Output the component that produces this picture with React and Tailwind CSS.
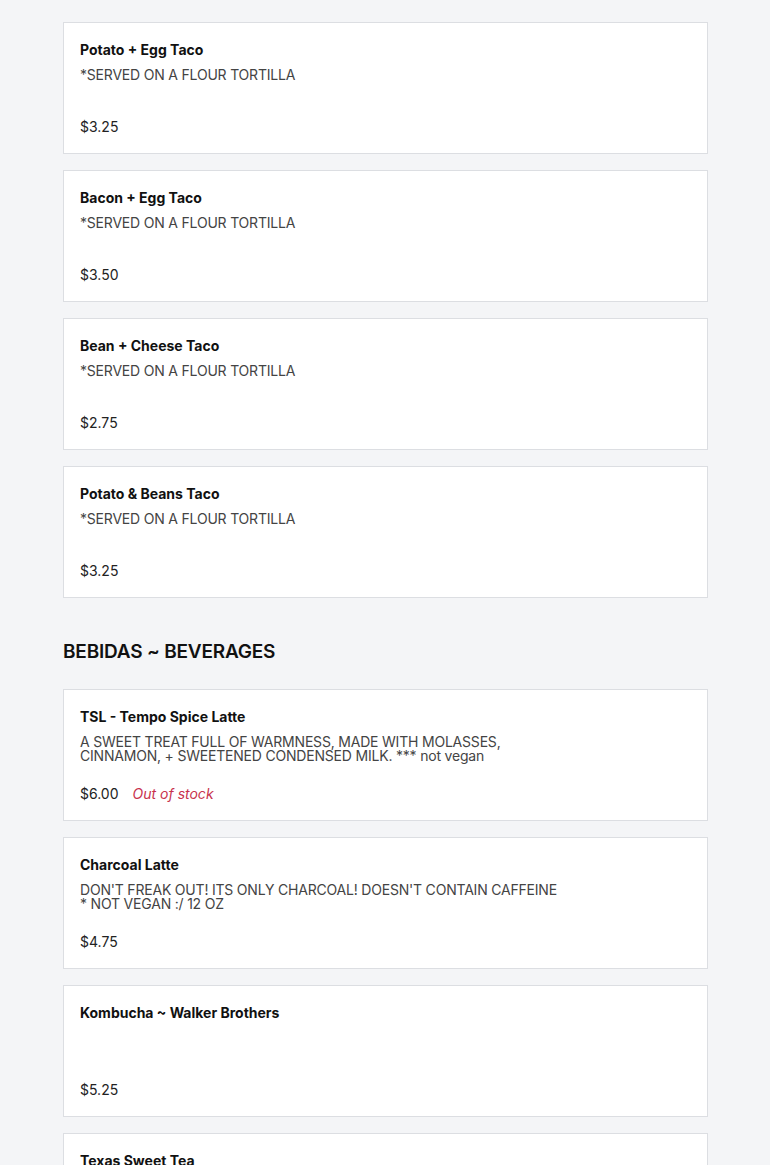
import React from "react";

const tacos = [
  { name: "Potato + Egg Taco", desc: ["*SERVED ON A FLOUR TORTILLA"], price: "$3.25" },
  { name: "Bacon + Egg Taco", desc: ["*SERVED ON A FLOUR TORTILLA"], price: "$3.50" },
  { name: "Bean + Cheese Taco", desc: ["*SERVED ON A FLOUR TORTILLA"], price: "$2.75" },
  { name: "Potato & Beans Taco", desc: ["*SERVED ON A FLOUR TORTILLA"], price: "$3.25" },
];

const drinks = [
  {
    name: "TSL - Tempo Spice Latte",
    desc: [
      "A SWEET TREAT FULL OF WARMNESS, MADE WITH MOLASSES,",
      "CINNAMON, + SWEETENED CONDENSED MILK. *** not vegan",
    ],
    price: "$6.00",
    out: true,
  },
  {
    name: "Charcoal Latte",
    desc: [
      "DON'T FREAK OUT! ITS ONLY CHARCOAL! DOESN'T CONTAIN CAFFEINE",
      "* NOT VEGAN :/ 12 OZ",
    ],
    price: "$4.75",
  },
  { name: "Kombucha ~ Walker Brothers", desc: [], price: "$5.25" },
  { name: "Texas Sweet Tea", desc: [], price: "$3.00" },
];

function Item({ item }) {
  return (
    <div className="h-[132px] bg-white border border-[#dcdee2] px-4 pt-[17px] pb-4 flex flex-col">
      <h3 className="text-[14px] leading-5 font-bold text-[#111]">{item.name}</h3>
      {item.desc.length > 0 && (
        <p className="mt-[8px] text-[14px] leading-[14px] text-[#444] tracking-[-0.2px]">
          {item.desc.map((d, i) => (
            <span key={i} className="block">{d}</span>
          ))}
        </p>
      )}
      <div className="mt-auto flex items-center gap-[14px] text-[14px] leading-5 text-[#222]">
        <span>{item.price}</span>
        {item.out && <span className="italic text-[#c8334d]">Out of stock</span>}
      </div>
    </div>
  );
}

export default function App() {
  return (
    <div
      className="w-full min-h-screen bg-[#f4f5f7] pt-[22px] pb-10"
      style={{ fontFamily: "Inter, 'Noto Sans', sans-serif" }}
    >
      <div className="w-[645px] ml-[63px] flex flex-col gap-4">
        {tacos.map((t) => (
          <Item key={t.name} item={t} />
        ))}
      </div>

      <h2 className="ml-[63px] mt-[40px] mb-[23px] text-[19px] leading-7 font-semibold tracking-[-0.2px] text-[#111]">
        BEBIDAS ~ BEVERAGES
      </h2>

      <div className="w-[645px] ml-[63px] flex flex-col gap-4">
        {drinks.map((t) => (
          <Item key={t.name} item={t} />
        ))}
      </div>
    </div>
  );
}
